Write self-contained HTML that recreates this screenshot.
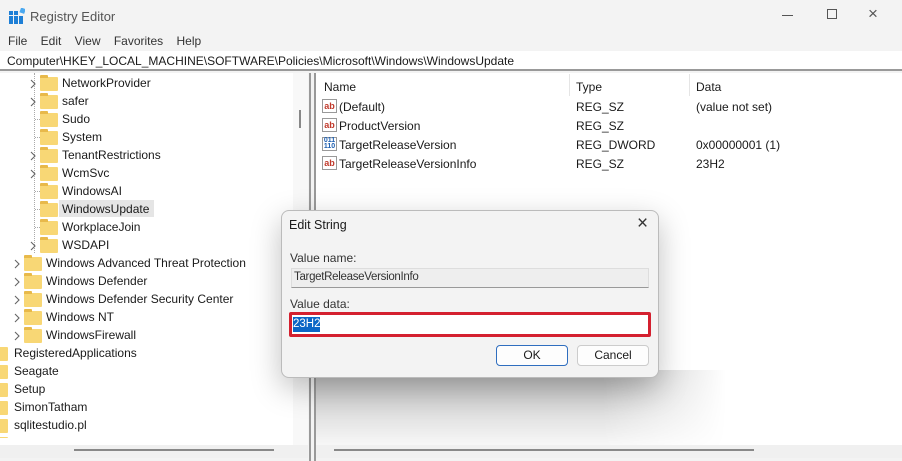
<!DOCTYPE html>
<html><head><style>
*{margin:0;padding:0;box-sizing:border-box}
body{width:902px;height:461px;overflow:hidden;background:#f3f3f3;font-family:"Liberation Sans",sans-serif;font-size:12px;color:#1a1a1a;position:relative}
.a{position:absolute;white-space:nowrap}
.fold{position:absolute;width:18px;height:14px;background:#f8d775;border-radius:1px}
.fold:before{content:"";position:absolute;left:0;top:-2px;width:8px;height:3px;background:#e8b94a;border-radius:1px 1px 0 0}
.chev{position:absolute;width:6px;height:10px}
.ab{position:absolute;width:15px;height:14px;border:1px solid #999;background:#fff;font-size:9px;color:#c0392b;font-weight:bold;line-height:12px;text-align:center}
</style></head><body>
<div class="a" style="left:9px;top:8px;width:16px;height:16px">
<svg width="16" height="16"><g fill="#1e7fd6"><rect x="0" y="3" width="4" height="4"/><rect x="5" y="3" width="4" height="4"/><rect x="0" y="8" width="4" height="4"/><rect x="5" y="8" width="4" height="4"/><rect x="10" y="8" width="4" height="4"/><rect x="0" y="12" width="4" height="4"/><rect x="5" y="12" width="4" height="4"/><rect x="10" y="12" width="4" height="4"/></g><rect x="11" y="0" width="5" height="5" fill="#4aa8f0" transform="rotate(20 13 3)"/></svg></div>
<div class="a" style="left:30px;top:9px;font-size:13px;color:#555">Registry Editor</div>
<div class="a" style="left:782px;top:15px;width:11px;height:1px;background:#555"></div>
<div class="a" style="left:827px;top:9px;width:10px;height:10px;border:1px solid #555"></div>
<div class="a" style="left:868px;top:4px;font-size:17px;color:#555">×</div>
<div class="a" style="left:8px;top:34px;font-size:12px;color:#333">File&nbsp;&nbsp;&nbsp;&nbsp;Edit&nbsp;&nbsp;&nbsp;&nbsp;View&nbsp;&nbsp;&nbsp;&nbsp;Favorites&nbsp;&nbsp;&nbsp;&nbsp;Help</div>
<div class="a" style="left:0;top:51px;width:902px;height:20px;background:#fff;border-bottom:2px solid #999"></div>
<div class="a" style="left:7px;top:54px;font-size:12px">Computer\HKEY_LOCAL_MACHINE\SOFTWARE\Policies\Microsoft\Windows\WindowsUpdate</div>
<div class="a" style="left:0;top:73px;width:293px;height:372px;background:#fff"></div>
<div class="a" style="left:293px;top:73px;width:15px;height:372px;background:#f8f8f8"></div>
<div class="a" style="left:299px;top:110px;width:2px;height:18px;background:#888"></div>
<div class="a" style="left:309px;top:73px;width:2px;height:388px;background:#999"></div>
<div class="a" style="left:314px;top:73px;width:2px;height:388px;background:#999"></div>
<div class="a" style="left:0;top:445px;width:308px;height:13px;background:#f0f0f0"></div>
<div class="a" style="left:74px;top:449px;width:200px;height:2px;background:#888"></div>
<div class="a" style="left:34px;top:73px;height:180px;border-left:1px dotted #aaa"></div>
<div id="tree"></div>
<div class="a" style="left:316px;top:73px;width:586px;height:372px;background:#fff"></div>
<div class="a" style="left:316px;top:445px;width:586px;height:13px;background:#f0f0f0"></div>
<div class="a" style="left:334px;top:449px;width:420px;height:2px;background:#888"></div>
<div class="a" style="left:569px;top:74px;width:1px;height:22px;background:#e5e5e5"></div>
<div class="a" style="left:689px;top:74px;width:1px;height:22px;background:#e5e5e5"></div>
<div class="a" style="left:324px;top:80px">Name</div>
<div class="a" style="left:576px;top:80px">Type</div>
<div class="a" style="left:696px;top:80px">Data</div>
<div class="ab" style="left:322px;top:99px">ab</div><div class="a" style="left:339px;top:100px">(Default)</div><div class="a" style="left:576px;top:100px">REG_SZ</div><div class="a" style="left:696px;top:100px">(value not set)</div>
<div class="ab" style="left:322px;top:118px">ab</div><div class="a" style="left:339px;top:119px">ProductVersion</div><div class="a" style="left:576px;top:119px">REG_SZ</div>
<div class="ab" style="left:322px;top:137px;color:#1e5fb0;font-size:7px;line-height:6px">011<br>110</div><div class="a" style="left:339px;top:138px">TargetReleaseVersion</div><div class="a" style="left:576px;top:138px">REG_DWORD</div><div class="a" style="left:696px;top:138px">0x00000001 (1)</div>
<div class="ab" style="left:322px;top:156px">ab</div><div class="a" style="left:339px;top:157px">TargetReleaseVersionInfo</div><div class="a" style="left:576px;top:157px">REG_SZ</div><div class="a" style="left:696px;top:157px">23H2</div>
<div class="a" style="left:316px;top:370px;width:410px;height:75px;background:linear-gradient(rgba(0,0,0,.25),rgba(0,0,0,.03));-webkit-mask-image:linear-gradient(90deg,#000 0%,#000 70%,transparent 100%);mask-image:linear-gradient(90deg,#000 0%,#000 70%,transparent 100%)"></div>
<div class="a" style="left:281px;top:210px;width:378px;height:168px;background:#f3f3f3;border:1px solid #bbb;border-radius:8px;box-shadow:0 10px 30px rgba(0,0,0,.25)"></div>
<div class="a" style="left:289px;top:218px;font-size:12.5px">Edit String</div>
<div class="a" style="left:637px;top:213px;font-size:19px;color:#333">×</div>
<div class="a" style="left:290px;top:251px;color:#333">Value name:</div>
<div class="a" style="left:291px;top:268px;width:358px;height:20px;background:#eee;border:1px solid #ddd;border-bottom-color:#999"></div>
<div class="a" style="left:294px;top:271px;font-size:11.5px;color:#333;letter-spacing:-.3px">TargetReleaseVersionInfo</div>
<div class="a" style="left:290px;top:297px;color:#333">Value data:</div>
<div class="a" style="left:289px;top:312px;width:362px;height:25px;border:3px solid #d4202f;background:#fff;border-radius:2px"></div>
<div class="a" style="left:293px;top:317px;height:15px;width:27px;background:#0c66c6;color:#fff;font-size:11.5px;line-height:15px">23H2</div>
<div class="a" style="left:496px;top:345px;width:72px;height:21px;border:1px solid #2f6ebf;border-radius:4px;background:#fdfdfd;text-align:center;line-height:19px">OK</div>
<div class="a" style="left:577px;top:345px;width:72px;height:21px;border:1px solid #ccc;border-radius:4px;background:#fdfdfd;text-align:center;line-height:19px">Cancel</div>
<script>
var rows=[["NetworkProvider",2,1],["safer",2,1],["Sudo",2,0],["System",2,0],["TenantRestrictions",2,1],["WcmSvc",2,1],["WindowsAI",2,0],["WindowsUpdate",2,0,1],["WorkplaceJoin",2,0],["WSDAPI",2,1],["Windows Advanced Threat Protection",1,1],["Windows Defender",1,1],["Windows Defender Security Center",1,1],["Windows NT",1,1],["WindowsFirewall",1,1],["RegisteredApplications",0,0],["Seagate",0,0],["Setup",0,0],["SimonTatham",0,0],["sqlitestudio.pl",0,0],["SquirrelIntegrationClient",0,0]];
var h="";rows.forEach(function(r,i){var y=74+i*18;var fx=r[1]==2?40:r[1]==1?24:-10;var tx=r[1]==2?62:r[1]==1?46:14;
if(r[2])h+='<svg class="chev" style="left:'+(fx-10)+'px;top:'+(y+5)+'px" width="6" height="10"><path d="M1 1 L5 5 L1 9" fill="none" stroke="#666" stroke-width="1.1"/></svg>';
else if(r[1]==2)h+='<div class="a" style="left:35px;top:'+(y+9)+'px;width:5px;border-top:1px dotted #aaa"></div>';
h+='<div class="fold" style="left:'+fx+'px;top:'+(y+3)+'px"></div>';
if(r[3])h+='<div class="a" style="left:'+(tx-3)+'px;top:'+y+'px;width:95px;height:17px;background:#e5e5e5"></div>';
h+='<div class="a" style="left:'+tx+'px;top:'+(y+2)+'px;font-size:12px">'+r[0]+'</div>';});
var t=document.getElementById("tree");t.outerHTML='<div class="a" style="left:0;top:73px;width:293px;height:365px;overflow:hidden"><div style="position:relative;top:-73px">'+h+'</div></div>';
</script>
</body></html>
